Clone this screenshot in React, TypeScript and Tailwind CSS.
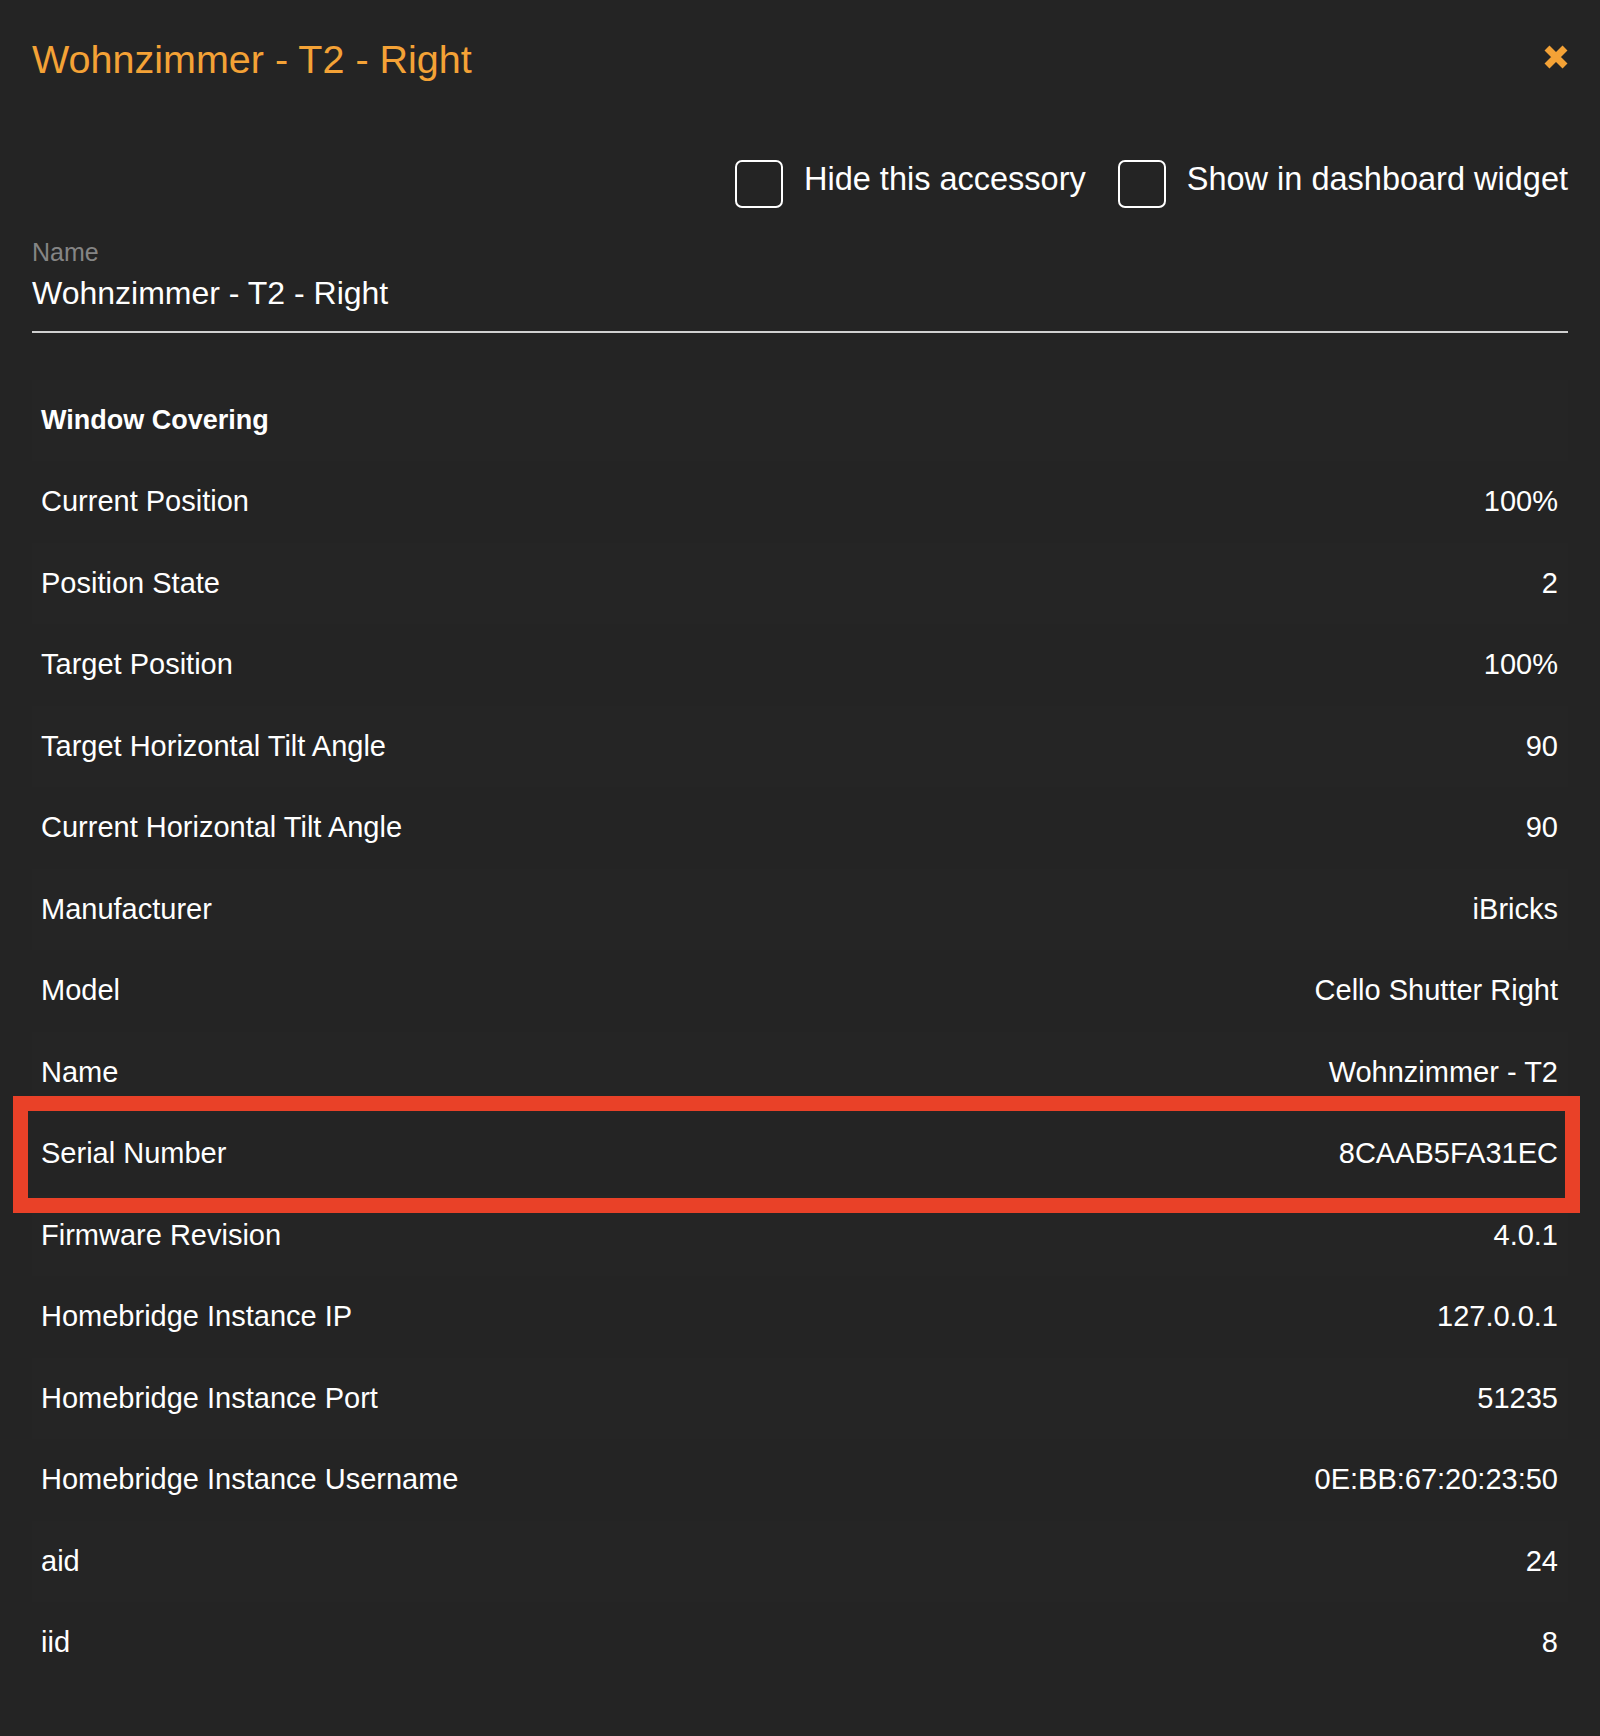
const rows: { label: string; value: string; highlight?: boolean }[] = [
  { label: 'Current Position', value: '100%' },
  { label: 'Position State', value: '2' },
  { label: 'Target Position', value: '100%' },
  { label: 'Target Horizontal Tilt Angle', value: '90' },
  { label: 'Current Horizontal Tilt Angle', value: '90' },
  { label: 'Manufacturer', value: 'iBricks' },
  { label: 'Model', value: 'Cello Shutter Right' },
  { label: 'Name', value: 'Wohnzimmer - T2' },
  { label: 'Serial Number', value: '8CAAB5FA31EC', highlight: true },
  { label: 'Firmware Revision', value: '4.0.1' },
  { label: 'Homebridge Instance IP', value: '127.0.0.1' },
  { label: 'Homebridge Instance Port', value: '51235' },
  { label: 'Homebridge Instance Username', value: '0E:BB:67:20:23:50' },
  { label: 'aid', value: '24' },
  { label: 'iid', value: '8' },
];

function CloseIcon() {
  return (
    <svg width="26" height="26" viewBox="0 0 26 26" className="text-[#f4a236]">
      <path d="M4 4 L22 22 M22 4 L4 22" stroke="currentColor" strokeWidth="7" strokeLinecap="butt" />
    </svg>
  );
}

function Checkbox({ label }: { label: string }) {
  return (
    <label className="flex items-center">
      <span className="w-[48px] h-[48px] rounded-[7px] border-2 border-white shrink-0" />
      <span className="ml-[21px] pb-2 text-[32.5px] leading-none text-white whitespace-nowrap">{label}</span>
    </label>
  );
}

export default function App() {
  return (
    <div
      className="min-h-screen bg-[#242424] px-8 pb-[52px]"
      style={{ fontFamily: '"Liberation Sans", Arial, sans-serif' }}
    >
      {/* Header */}
      <div className="flex items-start justify-between pt-10">
        <h1 className="text-[39.5px] leading-none text-[#f4a236] font-normal">Wohnzimmer - T2 - Right</h1>
        <button className="mt-1 -mr-px">
          <CloseIcon />
        </button>
      </div>

      {/* Options */}
      <div className="flex justify-end items-center gap-[32px] mt-[80px]">
        <Checkbox label="Hide this accessory" />
        <Checkbox label="Show in dashboard widget" />
      </div>

      {/* Name field */}
      <div className="mt-8 border-b-2 border-[#d0d0d0] pb-[22px]">
        <div className="text-[25px] leading-none text-[#858585]">Name</div>
        <div className="mt-3 text-[32px] leading-none text-white">Wohnzimmer - T2 - Right</div>
      </div>

      {/* Characteristics */}
      <div className="mt-[47px] text-[29px] text-white">
        <div className="h-[81.5px] flex items-center px-[9px] bg-[#252525]">
          <span className="text-[27px] font-bold">Window Covering</span>
        </div>
        {rows.map((r, i) => (
          <div
            key={r.label}
            className={`relative h-[81.5px] flex items-center justify-between pl-[9px] pr-[10px] ${
              i % 2 === 1 ? 'bg-[#252525]' : ''
            }`}
          >
            <span>{r.label}</span>
            <span>{r.value}</span>
            {r.highlight && (
              <span className="absolute z-10 -left-[19px] -right-[12px] -top-[17px] -bottom-[18px] border-[15px] border-[#e94128] pointer-events-none" />
            )}
          </div>
        ))}
      </div>
    </div>
  );
}
